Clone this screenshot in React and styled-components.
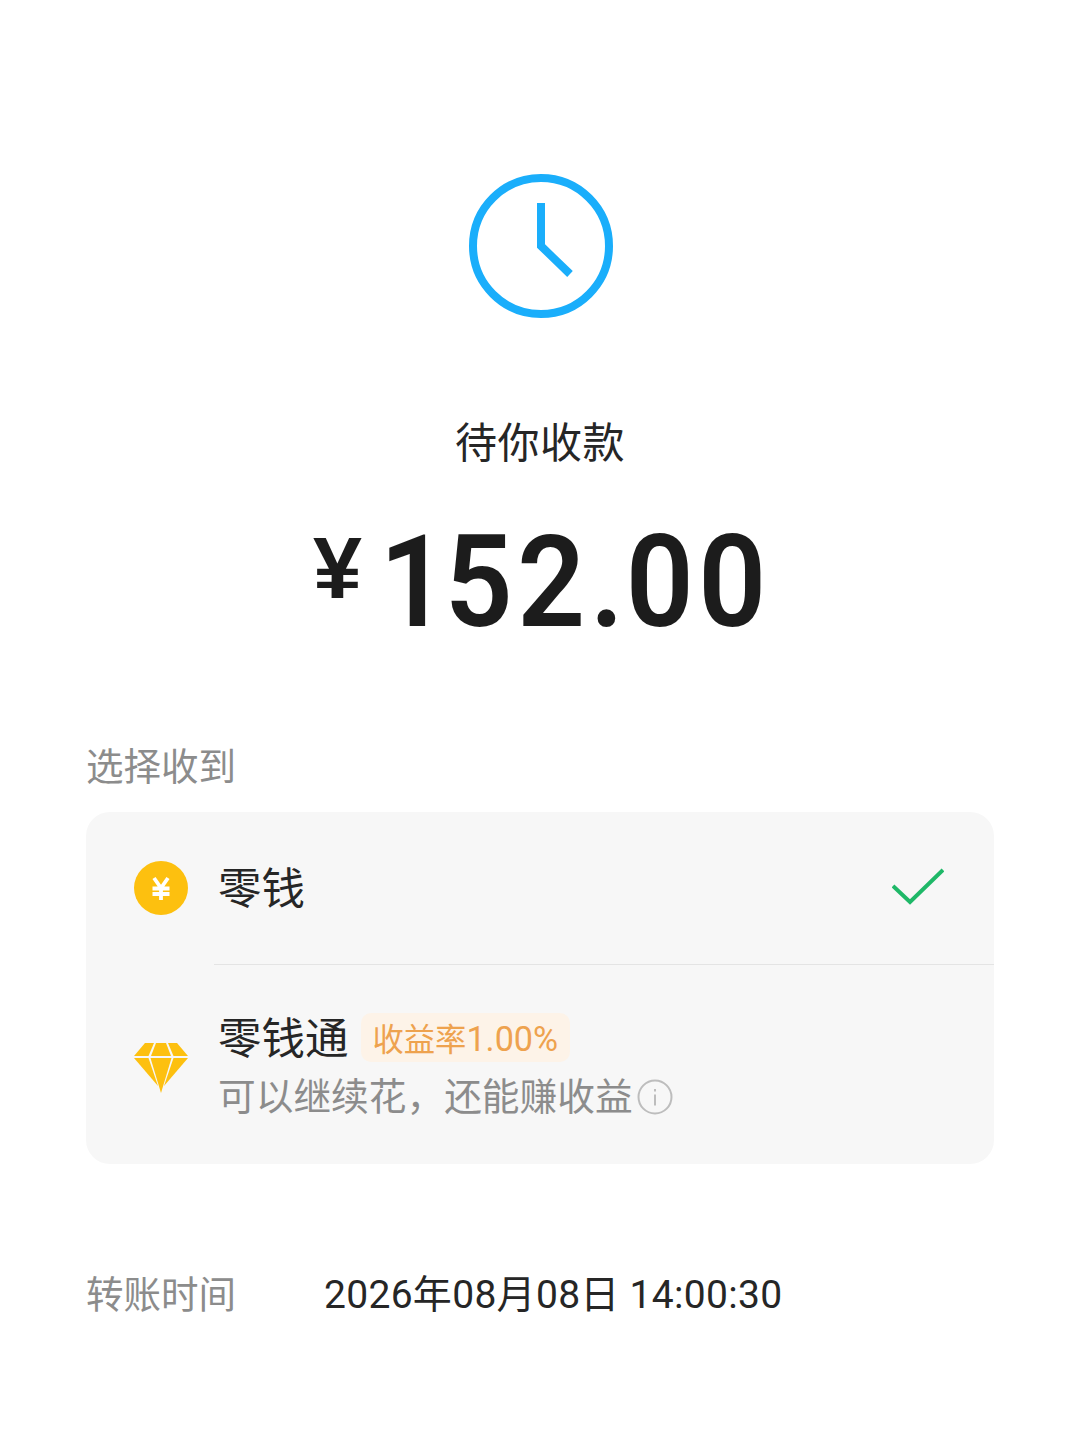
import React from 'react';
import styled, { createGlobalStyle } from 'styled-components';

const GlobalStyle = createGlobalStyle`
  html, body {
    margin: 0;
    padding: 0;
    background: #ffffff;
  }
  body {
    font-family: Roboto, "Noto Sans CJK SC", sans-serif;
  }
`;

const Page = styled.div`
  width: 1080px;
  height: 1440px;
  box-sizing: border-box;
  padding: 174px 86px 0;
  display: flex;
  flex-direction: column;
  overflow: hidden;
`;

const ClockWrap = styled.div`
  display: flex;
  justify-content: center;
  padding-left: 2px;
  height: 144px;
`;

const Title = styled.h1`
  margin: 96px 0 0;
  height: 60px;
  font-size: 42px;
  line-height: 60px;
  font-weight: 400;
  letter-spacing: 0.5px;
  text-align: center;
  color: #262626;
`;

const Amount = styled.div`
  margin-top: 36px;
  padding-left: 19px;
  height: 144px;
  display: flex;
  justify-content: center;
  align-items: flex-start;
  color: #1c1c1c;
`;

const Yen = styled.span`
  font-family: "Liberation Sans", sans-serif;
  font-size: 88px;
  line-height: 116px;
  font-weight: 700;
  margin-right: -5px;
`;

const Digits = styled.span`
  display: inline-block;
  font-family: Roboto, sans-serif;
  font-size: 128px;
  line-height: 144px;
  font-weight: 600;
  letter-spacing: 5px;
  transform: scaleX(0.93);
`;

const One = styled.span`
  margin-left: 8px;
  letter-spacing: -3px;
`;

const Dot = styled.span`
  letter-spacing: 2px;
`;

const SectionLabel = styled.div`
  margin-top: 88px;
  height: 50px;
  font-size: 37.5px;
  line-height: 50px;
  color: #8c8c8c;
`;

const Card = styled.div`
  margin-top: 20px;
  height: 352px;
  background: #f7f7f7;
  border-radius: 24px;
  display: flex;
  flex-direction: column;
`;

const Option = styled.div`
  height: ${({ $height }) => $height}px;
  display: flex;
  align-items: center;
  padding: ${({ $top }) => $top || 0}px 50px 0 48px;
  box-sizing: border-box;
`;

const IconSlot = styled.div`
  width: 54px;
  height: 54px;
  flex: none;
  margin-right: 30px;
`;

const OptionName = styled.div`
  padding-top: 4px;
  font-size: 43.5px;
  line-height: 56px;
  color: #262626;
`;

const Check = styled.svg`
  margin-left: auto;
  flex: none;
`;

const Divider = styled.div`
  height: 1px;
  margin-left: 128px;
  background: #e4e4e4;
`;

const OptionBody = styled.div`
  display: flex;
  flex-direction: column;
`;

const NameRow = styled.div`
  display: flex;
  align-items: center;
  gap: 12px;
`;

const RateTag = styled.span`
  height: 49px;
  padding: 0 12px;
  border-radius: 10px;
  background: #fdf3e8;
  color: #eea24e;
  font-size: 31.3px;
  line-height: 53px;
`;

const RateValue = styled.span`
  font-size: 34.2px;
`;

const SubRow = styled.div`
  display: flex;
  align-items: center;
  margin-top: 2px;
  font-size: 37.7px;
  line-height: 54px;
  color: #8c8c8c;
`;

const InfoIcon = styled.svg`
  flex: none;
  margin-left: 4px;
`;

const TimeRow = styled.div`
  margin-top: 100px;
  display: flex;
  align-items: center;
  height: 54px;
`;

const TimeLabel = styled.div`
  width: 238px;
  font-size: 37.5px;
  color: #8c8c8c;
`;

const TimeValue = styled.div`
  font-size: 39px;
  letter-spacing: 0.3px;
  color: #262626;
`;

const ClockIcon = () => (
  <svg width="144" height="144" viewBox="0 0 144 144" fill="none">
    <circle cx="72" cy="72" r="68" stroke="#1aaefb" strokeWidth="8" />
    <path d="M72 29v43l29 28" stroke="#1aaefb" strokeWidth="8" />
  </svg>
);

const CoinIcon = () => (
  <svg width="54" height="54" viewBox="0 0 54 54">
    <circle cx="27" cy="27" r="27" fill="#fdc00f" />
    <path
      d="M20 17l7 10 7-10M18.500 27.500h17M18.500 33h17M27 27v12"
      fill="none"
      stroke="#ffffff"
      strokeWidth="3.800"
    />
  </svg>
);

const DiamondIcon = () => (
  <svg width="54" height="54" viewBox="0 0 54 54">
    <g fill="#fdc00f">
      <path d="M11 4h9l-5.500 13H0z" />
      <path d="M22 4h10l5 13H17z" />
      <path d="M34 4h9l11 13H39.500z" />
      <path d="M0 19h14.500l9.500 28z" />
      <path d="M16.500 19h21L27 54z" />
      <path d="M39.500 19H54L30 47z" />
    </g>
  </svg>
);

const App = () => {
  return (
    <Page>
      <GlobalStyle />
      <ClockWrap>
        <ClockIcon />
      </ClockWrap>
      <Title>待你收款</Title>
      <Amount>
        <Yen>¥</Yen>
        <Digits>
          <One>1</One>52<Dot>.</Dot>00
        </Digits>
      </Amount>
      <SectionLabel>选择收到</SectionLabel>
      <Card>
        <Option $height={152}>
          <IconSlot>
            <CoinIcon />
          </IconSlot>
          <OptionName>零钱</OptionName>
          <Check width="52" height="40" viewBox="0 0 52 40" fill="none">
            <path d="M1 18l17 16L51 2" stroke="#1fb868" strokeWidth="4" />
          </Check>
        </Option>
        <Divider />
        <Option $height={199} $top={2}>
          <IconSlot>
            <DiamondIcon />
          </IconSlot>
          <OptionBody>
            <NameRow>
              <OptionName>零钱通</OptionName>
              <RateTag>
                收益率<RateValue>1.00%</RateValue>
              </RateTag>
            </NameRow>
            <SubRow>
              可以继续花，还能赚收益
              <InfoIcon width="36" height="36" viewBox="0 0 36 36" fill="none">
                <circle cx="18" cy="18" r="16.500" stroke="#bdbdbd" strokeWidth="2" />
                <path d="M18 10v2.500M18 15.500v11" stroke="#bdbdbd" strokeWidth="2" />
              </InfoIcon>
            </SubRow>
          </OptionBody>
        </Option>
      </Card>
      <TimeRow>
        <TimeLabel>转账时间</TimeLabel>
        <TimeValue>2026年08月08日 14:00:30</TimeValue>
      </TimeRow>
    </Page>
  );
};

export default App;
